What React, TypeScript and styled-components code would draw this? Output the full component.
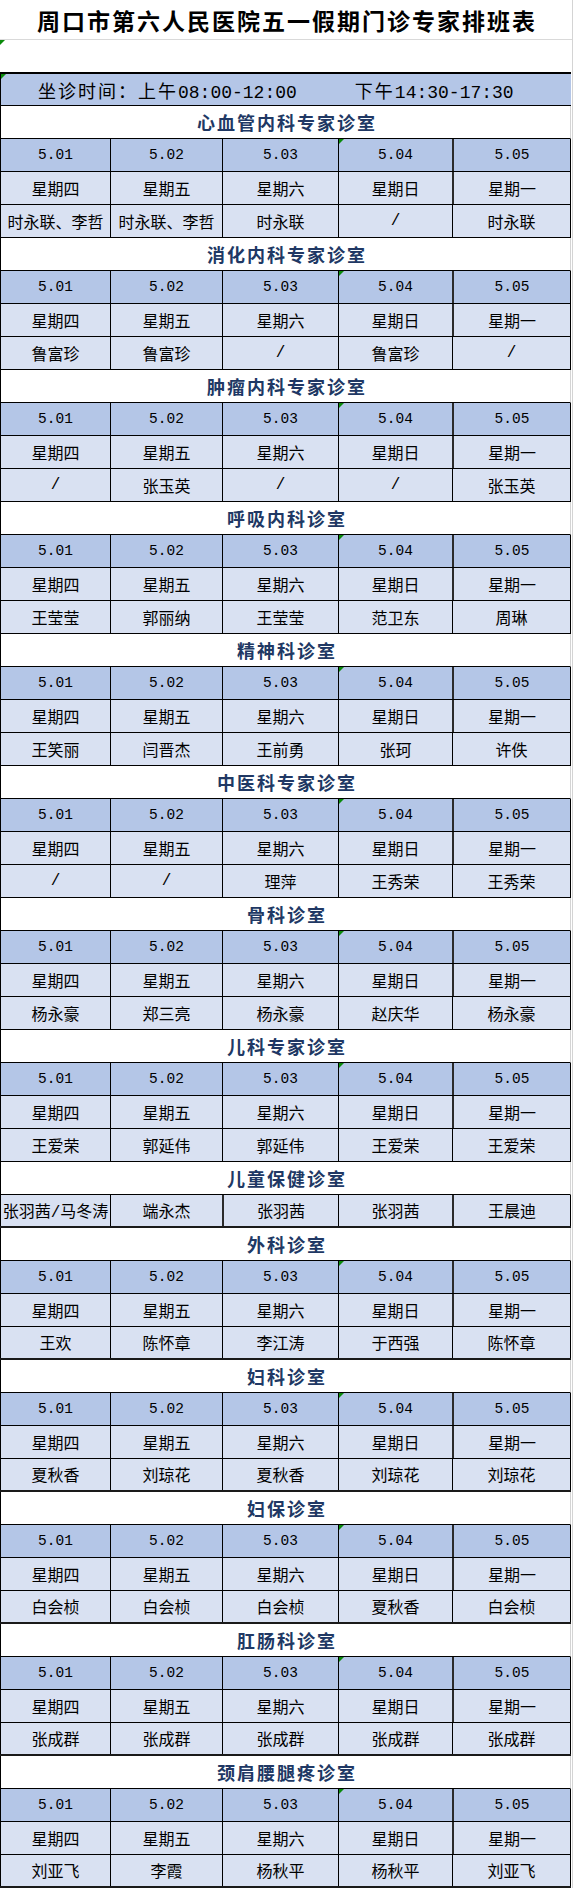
import React from "react";
import styled, { createGlobalStyle, css } from "styled-components";

const GlobalStyle = createGlobalStyle`
  html, body {
    margin: 0;
    padding: 0;
    background: #fff;
  }
  body {
    font-family: "Noto Sans CJK SC", "Liberation Sans", sans-serif;
    color: #000;
  }
`;

const DATES = ["5.01", "5.02", "5.03", "5.04", "5.05"];
const WEEKDAYS = ["星期四", "星期五", "星期六", "星期日", "星期一"];

type Dept = {
  name: string;
  doctors: string[];
  compact?: boolean;
  heavyEnd?: boolean;
};

const DEPTS: Dept[] = [
  { name: "心血管内科专家诊室", doctors: ["时永联、李哲", "时永联、李哲", "时永联", "/", "时永联"] },
  { name: "消化内科专家诊室", doctors: ["鲁富珍", "鲁富珍", "/", "鲁富珍", "/"] },
  { name: "肿瘤内科专家诊室", doctors: ["/", "张玉英", "/", "/", "张玉英"] },
  { name: "呼吸内科诊室", doctors: ["王莹莹", "郭丽纳", "王莹莹", "范卫东", "周琳"] },
  { name: "精神科诊室", doctors: ["王笑丽", "闫晋杰", "王前勇", "张珂", "许佚"] },
  { name: "中医科专家诊室", doctors: ["/", "/", "理萍", "王秀荣", "王秀荣"] },
  { name: "骨科诊室", doctors: ["杨永豪", "郑三亮", "杨永豪", "赵庆华", "杨永豪"] },
  { name: "儿科专家诊室", doctors: ["王爱荣", "郭延伟", "郭延伟", "王爱荣", "王爱荣"] },
  { name: "儿童保健诊室", doctors: ["张羽茜/马冬涛", "端永杰", "张羽茜", "张羽茜", "王晨迪"], compact: true, heavyEnd: true },
  { name: "外科诊室", doctors: ["王欢", "陈怀章", "李江涛", "于西强", "陈怀章"], heavyEnd: true },
  { name: "妇科诊室", doctors: ["夏秋香", "刘琼花", "夏秋香", "刘琼花", "刘琼花"], heavyEnd: true },
  { name: "妇保诊室", doctors: ["白会桢", "白会桢", "白会桢", "夏秋香", "白会桢"], heavyEnd: true },
  { name: "肛肠科诊室", doctors: ["张成群", "张成群", "张成群", "张成群", "张成群"], heavyEnd: true },
  { name: "颈肩腰腿疼诊室", doctors: ["刘亚飞", "李霞", "杨秋平", "杨秋平", "刘亚飞"], heavyEnd: true },
];

const marker = css`
  &::before {
    content: "";
    position: absolute;
    top: 0;
    left: 0;
    border-top: 5px solid #0a8a0a;
    border-right: 5px solid transparent;
  }
`;

const Sheet = styled.div`
  width: 572px;
  border-right: 1px solid #d4d4d4;
`;

const TitleRow = styled.h1`
  margin: 0;
  height: 40px;
  box-sizing: border-box;
  border-bottom: 1px solid #d9d9d9;
  display: flex;
  align-items: center;
  justify-content: center;
  font-size: 23px;
  font-weight: 700;
  letter-spacing: 2px;
  padding-left: 2px;
`;

const BlankRow = styled.div`
  position: relative;
  height: 32px;
  ${marker}
`;

const HoursRow = styled.div`
  position: relative;
  width: 571px;
  height: 34px;
  box-sizing: border-box;
  border-top: 2px solid #000;
  border-bottom: 1px solid #000;
  border-left: 1px solid #000;
  background: #b4c6e7;
  display: flex;
  align-items: center;
  gap: 58px;
  padding-left: 37px;
  font-family: "Liberation Mono", "Noto Sans CJK SC", monospace;
  font-size: 18px;
  ${marker}
`;

const Cjk = styled.span`
  letter-spacing: 2px;
`;

const DeptRow = styled.h2`
  margin: 0;
  width: 571px;
  height: 33px;
  box-sizing: border-box;
  border-left: 1px solid #000;
  border-right: 1px solid #d4d4d4;
  border-bottom: 1px solid #000;
  display: flex;
  align-items: center;
  justify-content: center;
  font-size: 18px;
  font-weight: 700;
  letter-spacing: 2px;
  padding-left: 3px;
  color: #203864;
`;

const Row = styled.div<{ $heavyBottom?: boolean }>`
  width: 571px;
  height: 33px;
  box-sizing: border-box;
  display: grid;
  grid-template-columns: 110px 112px 116px 114px 119px;
  border-bottom: ${({ $heavyBottom }) => ($heavyBottom ? "2px solid #1a1a1a" : "1px solid #000")};
`;

const Cell = styled.div<{ $tone: "date" | "day"; $heavy?: boolean; $marked?: boolean }>`
  position: relative;
  box-sizing: border-box;
  display: flex;
  align-items: center;
  justify-content: center;
  white-space: nowrap;
  border-left: ${({ $heavy }) => ($heavy ? "2px solid #2b2b2b" : "1px solid #000")};
  background: ${({ $tone }) => ($tone === "date" ? "#b4c6e7" : "#d9e1f2")};
  font-family: "Liberation Mono", "Noto Sans CJK SC", monospace;
  font-size: ${({ $tone }) => ($tone === "date" ? "14.5px" : "16px")};
  padding-bottom: 1px;

  &:last-child {
    border-right: 1px solid #000;
  }

  ${({ $marked }) => $marked && marker}
`;

function Section({ dept }: { dept: Dept }) {
  return (
    <>
      <DeptRow>{dept.name}</DeptRow>
      {!dept.compact && (
        <>
          <Row>
            {DATES.map((d, i) => (
              <Cell key={d} $tone="date" $heavy={i === 4} $marked={i === 3}>
                {d}
              </Cell>
            ))}
          </Row>
          <Row>
            {WEEKDAYS.map((w, i) => (
              <Cell key={w} $tone="day" $heavy={i === 4}>
                {w}
              </Cell>
            ))}
          </Row>
        </>
      )}
      <Row $heavyBottom={dept.heavyEnd}>
        {dept.doctors.map((name, i) => (
          <Cell key={i} $tone="day" $heavy={dept.compact && (i === 2 || i === 4)}>
            {name}
          </Cell>
        ))}
      </Row>
    </>
  );
}

export default function App() {
  return (
    <>
      <GlobalStyle />
      <Sheet>
        <TitleRow>周口市第六人民医院五一假期门诊专家排班表</TitleRow>
        <BlankRow />
        <HoursRow>
          <span>
            <Cjk>坐诊时间：上午</Cjk>08:00-12:00
          </span>
          <span>
            <Cjk>下午</Cjk>14:30-17:30
          </span>
        </HoursRow>
        {DEPTS.map((dept) => (
          <Section key={dept.name} dept={dept} />
        ))}
      </Sheet>
    </>
  );
}
